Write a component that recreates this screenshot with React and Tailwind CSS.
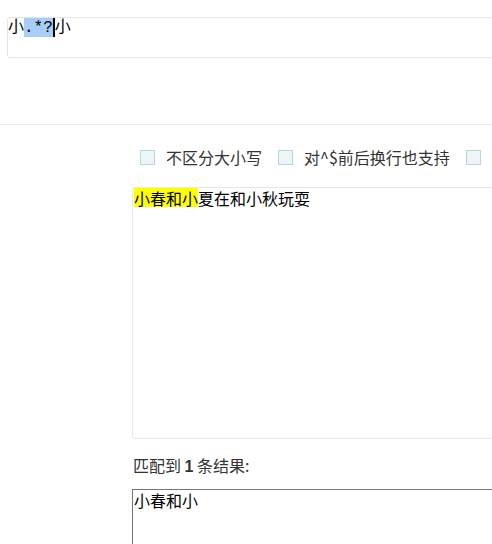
import React from 'react';

const cjk = { fontFamily: '"Noto Sans CJK SC", "Noto Sans", sans-serif' };

const Check = ({ label }) => (
  <label className="flex items-center shrink-0">
    <span className="w-[15px] h-[15px] border border-[#b5d8df] bg-[#eef5f7] shrink-0" />
    {label && (
      <span className="ml-[11px] mr-[16px] whitespace-nowrap text-[16px] text-[#333]">{label}</span>
    )}
  </label>
);

export default function App() {
  return (
    <div className="w-[492px] h-[544px] overflow-hidden bg-white text-black" style={cjk}>
      {/* pattern input */}
      <div className="pt-[17px] pl-[8px] h-[124px]">
        <div
          className="w-[600px] h-[41px] border border-[#e6e6e6] rounded-[3px] -ml-px text-[16px] leading-[20px]"
          style={{ fontFamily: '"Liberation Mono", "Noto Sans CJK SC", monospace' }}
        >
          <div className="flex items-start h-[20px]">
            <span>小</span>
            <span className="bg-[#a8cdf7] h-[19px] leading-[20px]">.*?</span>
            <span className="w-[2px] h-[19px] bg-black" />
            <span>小</span>
          </div>
        </div>
      </div>
      <div className="h-px bg-[#ececec]" />

      {/* options */}
      <div className="pl-[140px] mt-[20px] flex items-center h-[24px] leading-[24px]">
        <Check label="不区分大小写" />
        <Check label="对^$前后换行也支持" />
        <Check />
      </div>

      {/* source text */}
      <div className="pl-[132px] mt-[18px]">
        <div className="w-[500px] h-[252px] border border-[#e8e8e8] rounded-[3px] text-[16px] leading-[20px] pl-px">
          <span className="bg-[#ffff00] inline-block h-[19px]">小春和小</span>
          <span>夏在和小秋玩耍</span>
        </div>
      </div>

      {/* result count */}
      <div className="pl-[133px] mt-[14px] h-[24px] leading-[24px] text-[16px] text-[#333]">
        匹配到 <b className="font-bold" style={{ fontFamily: '"Liberation Sans", sans-serif' }}>1</b> 条结果:
      </div>

      {/* result */}
      <div className="pl-[132px] mt-[12px]">
        <div className="w-[500px] h-[100px] border border-[#767676] text-[16px] leading-[20px] pl-[1px]">
          小春和小
        </div>
      </div>
    </div>
  );
}
